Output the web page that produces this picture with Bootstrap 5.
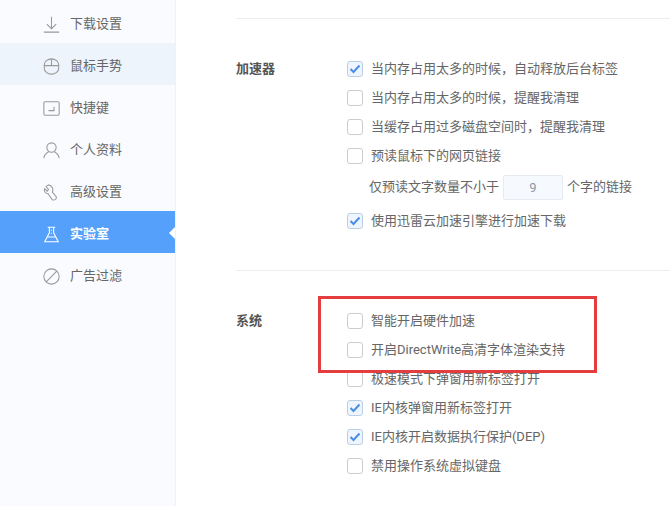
<!DOCTYPE html>
<html lang="zh-CN">
<head>
    <meta charset="UTF-8">
    <meta name="viewport" content="width=device-width, initial-scale=1.0">
    <title>实验室</title>
    <link href="https://cdn.jsdelivr.net/npm/bootstrap@5.3.0/dist/css/bootstrap.min.css" rel="stylesheet">
    <style>
        html, body { height: 506px; overflow: hidden; }
        body { font-family: Roboto, "Noto Sans CJK SC", sans-serif; font-size: 13px; color: #666; background: #fff; }
        .side-menu { width: 176px; height: 506px; background: #f9fbfe; border-right: 1px solid #eef1f6; padding-top: 1px; flex: none; }
        .side-item { height: 42px; padding: 4px 0 0 43px; gap: 10px; color: #666; position: relative; }
        .side-item svg { width: 17px; height: 17px; fill: none; stroke: #999; stroke-width: 1.25; flex: none; }
        .side-item.hover-row { background: #edf4fc; }
        .side-item.on { background: #55a0fb; color: #fff; font-weight: 700; }
        .side-item.on svg { stroke: #fff; }
        .side-item.on::after { content: ""; position: absolute; right: 0; top: 16px; border: 6px solid transparent; border-right-color: #fff; border-left-width: 0; }
        .main-pane { padding-left: 60px; position: relative; }
        .sep { height: 1px; background: #eceef2; }
        .set-group { display: flex; }
        .set-title { width: 111px; font-weight: 700; color: #555; line-height: 29px; flex: none; }
        .set-row { height: 29px; gap: 8px; }
        .set-row .form-check-input { width: 16px; height: 16px; margin: 0; border: 1px solid #ccc; border-radius: 3px; background-color: #fff; box-shadow: none; flex: none; }
        .set-row .form-check-input:checked { background-color: #eef5fd; border-color: #b9cfe8; background-image: url("data:image/svg+xml,%3csvg xmlns='http://www.w3.org/2000/svg' viewBox='0 0 16 16'%3e%3cpath fill='none' stroke='%234a90e2' stroke-width='2' d='M3.500 8l3 3 6-6.500'/%3e%3c/svg%3e"); background-size: 16px 16px; }
        .set-row label { white-space: nowrap; }
        .count-row { height: 36px; padding: 0 0 2px 22px; gap: 4px; }
        .count-box { width: 60px; height: 25px; padding: 0; text-align: center; font-size: 13px; color: #8a99a8; background: #f6f9fd; border: 1px solid #e6ebf2; border-radius: 2px; box-shadow: none; }
        .red-mark { position: absolute; left: 142px; top: 296px; width: 279px; height: 77px; border: 3px solid #e43d40; pointer-events: none; }
    </style>
</head>
<body>
<div class="d-flex">
    <aside class="side-menu">
        <div class="side-item d-flex align-items-center">
            <svg viewBox="0 0 20 20"><path d="M10 1v14M4.500 9.500l5.500 5.500 5.500-5.500M1 19h18"/></svg>下载设置
        </div>
        <div class="side-item hover-row d-flex align-items-center">
            <svg viewBox="0 0 20 20"><path d="M1.500 8a8.500 7 0 0 1 17 0v4a8.500 7 0 0 1-17 0zM1.500 9h17M10 1v8"/></svg>鼠标手势
        </div>
        <div class="side-item d-flex align-items-center">
            <svg viewBox="0 0 20 20"><rect x="1" y="2" width="18" height="16" rx="1.500"/><path d="M13 8v4.500H6.500"/></svg>快捷键
        </div>
        <div class="side-item d-flex align-items-center">
            <svg viewBox="0 0 20 20"><circle cx="10" cy="6.500" r="5.500"/><path d="M1 19c.5-4 3-6 5.500-7.500M19 19c-.5-4-3-6-5.500-7.500"/></svg>个人资料
        </div>
        <div class="side-item d-flex align-items-center">
            <svg viewBox="0 0 20 20"><path d="M6.500 1L3.500 3l3 3.500L5 8.500 2 5.500C1 8.500 2.500 11 6 11.500l4.500 6.500c2.500 2 6 0 5-3L11 9.500C12.500 6 10.500 1.500 6.500 1z"/></svg>高级设置
        </div>
        <div class="side-item on d-flex align-items-center">
            <svg viewBox="0 0 20 20"><path d="M5.500 1.500h9M7.500 1.500v6.500L2 18.500h16L12.500 8V1.500M5 13h10M10 4.500v1M10 8v1"/></svg>实验室
        </div>
        <div class="side-item d-flex align-items-center">
            <svg viewBox="0 0 20 20"><circle cx="10" cy="10" r="9"/><path d="M3.800 16.200L16.200 3.800"/></svg>广告过滤
        </div>
    </aside>

    <main class="main-pane flex-grow-1">
        <div class="sep" style="margin-top:18px"></div>
        <div class="set-group" style="margin-top:35px">
            <div class="set-title">加速器</div>
            <div>
                <div class="set-row d-flex align-items-center"><input class="form-check-input" type="checkbox" id="a1" checked><label for="a1">当内存占用太多的时候，自动释放后台标签</label></div>
                <div class="set-row d-flex align-items-center"><input class="form-check-input" type="checkbox" id="a2"><label for="a2">当内存占用太多的时候，提醒我清理</label></div>
                <div class="set-row d-flex align-items-center"><input class="form-check-input" type="checkbox" id="a3"><label for="a3">当缓存占用过多磁盘空间时，提醒我清理</label></div>
                <div class="set-row d-flex align-items-center"><input class="form-check-input" type="checkbox" id="a4"><label for="a4">预读鼠标下的网页链接</label></div>
                <div class="count-row d-flex align-items-center"><span>仅预读文字数量不小于</span><input class="form-control count-box" type="text" value="9"><span>个字的链接</span></div>
                <div class="set-row d-flex align-items-center"><input class="form-check-input" type="checkbox" id="a5" checked><label for="a5">使用迅雷云加速引擎进行加速下载</label></div>
            </div>
        </div>
        <div class="sep" style="margin-top:35px"></div>
        <div class="set-group" style="margin-top:35px">
            <div class="set-title">系统</div>
            <div>
                <div class="set-row d-flex align-items-center"><input class="form-check-input" type="checkbox" id="b1"><label for="b1">智能开启硬件加速</label></div>
                <div class="set-row d-flex align-items-center"><input class="form-check-input" type="checkbox" id="b2"><label for="b2">开启DirectWrite高清字体渲染支持</label></div>
                <div class="set-row d-flex align-items-center"><input class="form-check-input" type="checkbox" id="b3"><label for="b3">极速模式下弹窗用新标签打开</label></div>
                <div class="set-row d-flex align-items-center"><input class="form-check-input" type="checkbox" id="b4" checked><label for="b4">IE内核弹窗用新标签打开</label></div>
                <div class="set-row d-flex align-items-center"><input class="form-check-input" type="checkbox" id="b5" checked><label for="b5">IE内核开启数据执行保护(DEP)</label></div>
                <div class="set-row d-flex align-items-center"><input class="form-check-input" type="checkbox" id="b6"><label for="b6">禁用操作系统虚拟键盘</label></div>
            </div>
        </div>
        <div class="red-mark"></div>
    </main>
</div>
<script src="https://cdn.jsdelivr.net/npm/bootstrap@5.3.0/dist/js/bootstrap.bundle.min.js"></script>
</body>
</html>
